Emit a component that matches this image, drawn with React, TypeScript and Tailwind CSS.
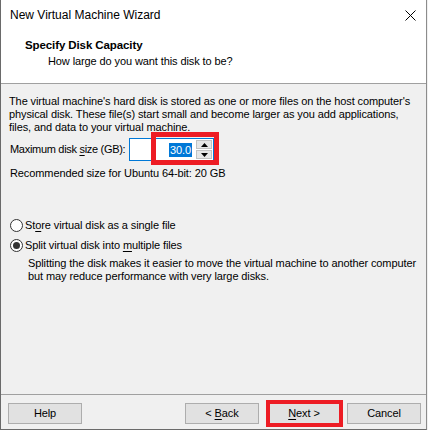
import React from 'react';

const U: React.FC<{ children: React.ReactNode }> = ({ children }) => (
  <span className="underline underline-offset-[2px]">{children}</span>
);

const Radio: React.FC<{ checked?: boolean; children: React.ReactNode }> = ({ checked, children }) => (
  <label className="flex items-center h-[20px] gap-[2px]">
    <span className="w-[13px] h-[13px] rounded-full border border-[#333333] bg-white flex items-center justify-center">
      {checked && <span className="w-[7px] h-[7px] rounded-full bg-[#333333]" />}
    </span>
    <span>{children}</span>
  </label>
);

const WinButton: React.FC<{ children: React.ReactNode; className?: string; isDefault?: boolean }> = ({
  children,
  className = '',
  isDefault,
}) => (
  <button
    className={`w-[74px] h-[21px] bg-[#e1e1e1] border flex items-center justify-center leading-none ${
      isDefault ? 'border-[#0078d7]' : 'border-[#adadad]'
    } ${className}`}
  >
    <span>{children}</span>
  </button>
);

export default function App() {
  return (
    <div className="w-[428px] h-[430px] bg-[#f0f0f0] font-['Liberation_Sans',sans-serif] text-[11px] tracking-[-0.1px] text-black">
      <div className="relative w-[427px] h-[430px] flex flex-col border-l border-b border-l-[#6a6a6a] border-b-[#6a6a6a] border-r border-r-[#8c8c8c] bg-[#f0f0f0]">
        {/* title bar */}
        <div className="h-[30px] bg-white flex items-center justify-between pl-[9px] pr-[10px]">
          <span className="text-[12px] tracking-normal">New Virtual Machine Wizard</span>
          <svg width="11" height="11" viewBox="0 0 11 11">
            <path d="M0.5 0.5 L10.5 10.5 M10.5 0.5 L0.5 10.5" stroke="#000" strokeWidth="1" />
          </svg>
        </div>

        {/* header */}
        <div className="h-[54px] bg-white border-b border-[#a0a0a0] pt-[7px] leading-[16px]">
          <div className="pl-[24px] font-bold text-[11.5px]">Specify Disk Capacity</div>
          <div className="pl-[47px]">How large do you want this disk to be?</div>
        </div>

        {/* body */}
        <div className="flex-1 pl-[8px] pt-[11px]">
          <p className="leading-[13px] whitespace-nowrap">
            The virtual machine's hard disk is stored as one or more files on the host computer's
            <br />
            physical disk. These file(s) start small and become larger as you add applications,
            <br />
            files, and data to your virtual machine.
          </p>

          <div className="mt-[4px] h-[23px] flex items-center pl-[1px]">
            <span className="w-[119px] whitespace-nowrap tracking-[-0.3px]">
              Maximum disk <U>s</U>ize (GB):
            </span>
            <div className="w-[85px] h-[23px] bg-white border border-[#0078d7] flex items-center">
              <div className="flex-1 flex justify-end pr-[4px]">
                <span className="bg-[#0078d7] text-white leading-[14px] px-[1px]">30.0</span>
              </div>
              <div className="w-[17px] h-full flex flex-col gap-[1px] py-[1px] pr-[1px]">
                <div className="flex-1 bg-[#e6e6e6] border border-[#c2c2c2] flex items-center justify-center">
                  <svg width="7" height="4" viewBox="0 0 7 4">
                    <path d="M3.5 0 L7 4 L0 4 Z" fill="#000" />
                  </svg>
                </div>
                <div className="flex-1 bg-[#e6e6e6] border border-[#c2c2c2] flex items-center justify-center">
                  <svg width="7" height="4" viewBox="0 0 7 4">
                    <path d="M0 0 L7 0 L3.5 4 Z" fill="#000" />
                  </svg>
                </div>
              </div>
            </div>
          </div>

          <div className="mt-[6px] leading-[13px] pl-[1px]">Recommended size for Ubuntu 64-bit: 20 GB</div>

          <div className="mt-[35px] pl-[1px]">
            <Radio>
              St<U>o</U>re virtual disk as a single file
            </Radio>
            <Radio checked>
              Split virtual disk into <U>m</U>ultiple files
            </Radio>
            <p className="pl-[18px] mt-[2px] leading-[13px] whitespace-nowrap">
              Splitting the disk makes it easier to move the virtual machine to another computer
              <br />
              but may reduce performance with very large disks.
            </p>
          </div>
        </div>

        {/* footer */}
        <div className="h-[35px] border-t border-[#a0a0a0] pt-[8px] flex items-start pl-[7px]">
          <WinButton>Help</WinButton>
          <WinButton className="ml-[103px]">
            &lt; <U>B</U>ack
          </WinButton>
          <WinButton isDefault className="ml-[8px]">
            <U>N</U>ext &gt;
          </WinButton>
          <WinButton className="ml-[6px]">Cancel</WinButton>
        </div>

        {/* red annotation boxes */}
        <div className="absolute left-[150px] top-[132px] w-[68px] h-[33px] border-[5px] border-[#ed1c24]" />
        <div className="absolute left-[265px] top-[400px] w-[77px] h-[27px] border-[4px] border-[#ed1c24]" />
      </div>
    </div>
  );
}
